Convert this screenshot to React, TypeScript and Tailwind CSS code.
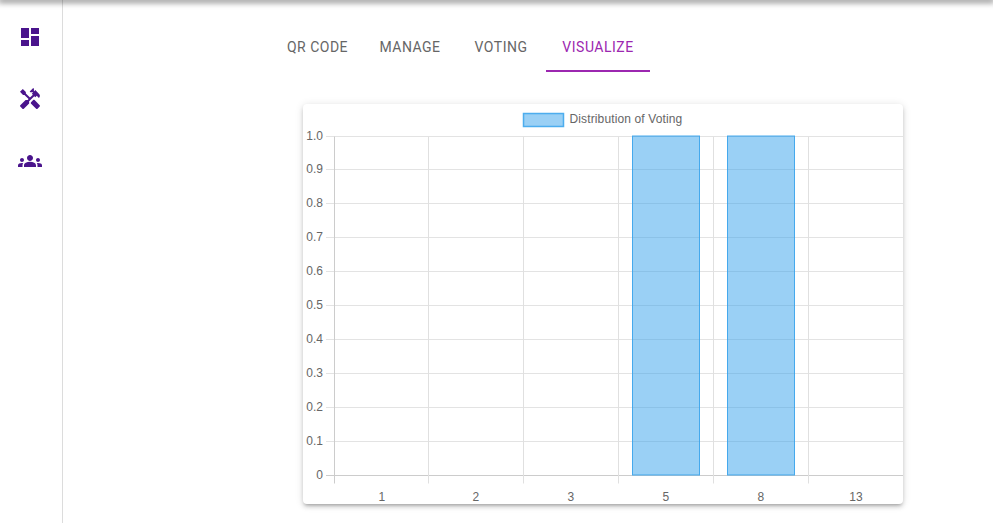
import React from 'react';
import { MdDashboard, MdHandyman, MdGroups } from 'react-icons/md';

const tabs = [
  { label: 'QR Code', width: 'w-[93px]' },
  { label: 'Manage', width: 'w-[92px]' },
  { label: 'Voting', width: 'w-[90px]' },
  { label: 'Visualize', width: 'w-[104px]', active: true },
];

const yTicks = ['1.0', '0.9', '0.8', '0.7', '0.6', '0.5', '0.4', '0.3', '0.2', '0.1', '0'];
const xLabels = ['1', '2', '3', '5', '8', '13'];

// chart coordinates are relative to the card
const left = 31.5;
const step = 94.83;
const top = 32.5;
const rowH = 33.9;

const labelFont = "'Liberation Sans', Arial, sans-serif";

const VotingChart = () => {
  const bottom = top + rowH * 10;
  return (
    <svg width="600" height="400" className="block">
      <rect x="220.5" y="9.5" width="40" height="13" fill="rgba(54,162,235,0.5)" stroke="rgba(54,162,235,0.85)" strokeWidth="1.5" />
      <text x="266.5" y="19" fontSize="12" letterSpacing="0.13" fill="#666" fontFamily={labelFont}>
        Distribution of Voting
      </text>

      {yTicks.map((t, i) => {
        const y = Math.round(top + rowH * i) - 0.5;
        return (
          <g key={t}>
            <line x1="23" x2="600" y1={y} y2={y} stroke={i === 10 ? '#ccc' : '#e3e3e3'} />
            <text x="20" y={y + 3} textAnchor="end" fontSize="12" fill="#666" fontFamily={labelFont}>
              {t}
            </text>
          </g>
        );
      })}

      {xLabels.map((l, i) => {
        const x = Math.round(left + step * i) - 0.5;
        return (
          <g key={l}>
            <line x1={x} x2={x} y1={top} y2={bottom + 8} stroke={i === 0 ? '#ccc' : '#e0e0e0'} />
            <text x={x + 47.4} y={bottom + 25} textAnchor="middle" fontSize="12" fill="#666" fontFamily={labelFont}>
              {l}
            </text>
          </g>
        );
      })}

      {[329, 424].map((x) => (
        <rect key={x} x={x + 0.5} y={top - 0.5} width="67" height={rowH * 10} fill="rgba(54,162,235,0.5)" stroke="rgba(54,162,235,0.9)" />
      ))}
    </svg>
  );
};

export default function App() {
  return (
    <div className="relative flex h-[523px] w-[993px] overflow-hidden bg-white font-['Roboto',sans-serif]">
      <div className="absolute left-0 right-0 top-0 h-0 shadow-[0_0_6px_2px_rgba(0,0,0,0.6)]" />

      <aside className="flex w-[63px] shrink-0 flex-col gap-[38px] border-r border-[#dcdcdc] pl-[18px] pt-[25px] text-[#4a148c]">
        <MdDashboard size={24} />
        <MdHandyman size={24} />
        <MdGroups size={24} />
      </aside>

      <main className="pl-[208px] pt-6">
        <div className="flex h-12">
          {tabs.map((tab) => (
            <div
              key={tab.label}
              className={`flex items-center justify-center border-b-2 text-sm font-normal uppercase tracking-[0.5px] ${tab.width} ${
                tab.active ? 'border-[#9c27b0] text-[#9c27b0]' : 'border-transparent text-[#666]'
              }`}
            >
              {tab.label}
            </div>
          ))}
        </div>

        <div className="ml-8 mt-8 h-[400px] w-[600px] rounded-[4px] bg-white shadow-[0_3px_3px_-2px_rgba(0,0,0,0.2),0_3px_4px_0_rgba(0,0,0,0.14),0_1px_8px_0_rgba(0,0,0,0.12)]">
          <VotingChart />
        </div>
      </main>
    </div>
  );
}
